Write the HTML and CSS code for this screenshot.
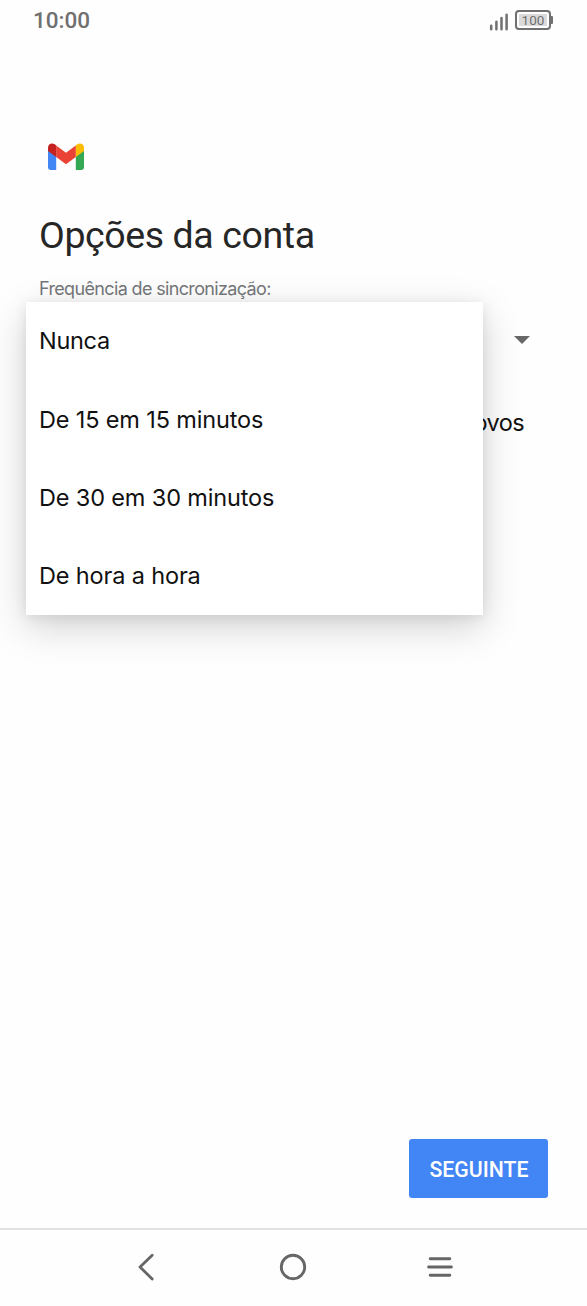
FILE: index.html
```html
<!DOCTYPE html>
<html lang="pt">
<head>
<meta charset="utf-8">
<title>Opções da conta</title>
<link rel="stylesheet" href="styles.css">
</head>
<body>
<header class="status">
  <span class="clock">10:00</span>
  <div class="indicators">
    <svg class="signal" width="20" height="18" viewBox="0 0 20 18" fill="none" stroke="#707070" stroke-width="2.5" stroke-linecap="round"><path d="M2.2 16.2v-3.4M7.4 16.2V8.7M12.5 16.2V5M17.6 16.2V1.8"/></svg>
    <div class="battery"><span class="charge">100</span></div>
  </div>
</header>
<main class="page">
  <svg class="logo" width="36" height="27" viewBox="0 0 36 27">
    <path fill="#4285f4" d="M0 7l8.200 6v14H2.400A2.400 2.400 0 0 1 0 24.600z"/>
    <path fill="#34a853" d="M36 7l-8.200 6v14h5.800A2.400 2.400 0 0 0 36 24.600z"/>
    <path fill="#fbbc04" d="M27.800 2.400l1.400-1.100C32-.8 36 .9 36 4.500V8l-8.200 6z"/>
    <path fill="#ea4335" d="M8.200 2.400L18 9.700l9.800-7.300V14L18 21.300 8.200 14z"/>
    <path fill="#c5221f" d="M0 4.500C0 .9 4-.8 6.800 1.300l1.400 1.100V14L0 8z"/>
  </svg>
  <h1 class="title">Opções da conta</h1>
  <div class="label">Frequência de sincronização:</div>
  <section class="fields">
    <div class="select"><svg width="16" height="8" viewBox="0 0 16 8"><path fill="#686868" d="M0 0h16L8 8z"/></svg></div>
    <div class="notify">novos</div>
    <ul class="menu">
      <li class="option never"><span>Nunca</span></li>
      <li class="option"><span>De 15 em 15 minutos</span></li>
      <li class="option"><span>De 30 em 30 minutos</span></li>
      <li class="option"><span>De hora a hora</span></li>
    </ul>
  </section>
  <div class="actions"><button class="next">SEGUINTE</button></div>
</main>
<nav class="nav">
  <svg width="28" height="28" viewBox="0 0 28 28" fill="none" stroke="#666" stroke-width="2.800" stroke-linecap="round" stroke-linejoin="round"><path d="M20.200 2.200L8 14l12.200 12"/></svg>
  <svg width="28" height="28" viewBox="0 0 28 28" fill="none" stroke="#666" stroke-width="2.900"><circle cx="14" cy="14" r="11.700"/></svg>
  <svg width="28" height="28" viewBox="0 0 28 28" fill="none" stroke="#666" stroke-width="2.900" stroke-linecap="round"><path d="M4.200 5.800h19.600M2.600 14h22.800M4.200 22.200h19.600"/></svg>
</nav>
</body>
</html>
```
FILE: styles.css
```css
* { box-sizing: border-box; }
body { margin: 0; height: 1306px; display: flex; flex-direction: column; background: #fefefe; font-family: Inter, sans-serif; overflow: hidden; }
.status { height: 40px; padding: 0 33px; display: flex; justify-content: space-between; align-items: center; flex: none; }
.clock { font: 500 22.500px/40px Roboto, sans-serif; color: #707070; letter-spacing: 0; }
.indicators { display: flex; gap: 6px; align-items: center; }
.signal { margin-top: 4px; }
.battery { position: relative; width: 36px; height: 20px; margin-right: 3px; padding: 2px; border: 2px solid #707070; border-radius: 4px; }
.battery::after { content: ""; position: absolute; right: -4px; top: 4px; width: 3px; height: 8px; background: #707070; border-radius: 0 1px 1px 0; }
.charge { display: block; height: 12px; background: #dadada; font: 400 13.500px/13px Roboto, sans-serif; color: #707070; text-align: center; }
.page { flex: 1; display: flex; flex-direction: column; padding: 103px 39px 0; }
.logo { margin-left: 9px; flex: none; }
.title { margin: 43px 0 0; font: 400 37.500px/44px Roboto, sans-serif; color: #262626; white-space: nowrap; letter-spacing: -.4px; }
.label { margin-top: 20px; height: 25px; font-size: 18px; line-height: 24px; color: #75777a; letter-spacing: -.65px; white-space: nowrap; }
.fields { position: relative; height: 313px; flex: none; }
.select { height: 78px; padding: 34px 18px 0 0; display: flex; justify-content: flex-end; }
.notify { margin-top: 26px; padding-right: 24px; text-align: right; font-size: 23.500px; line-height: 34px; color: #111; letter-spacing: -.6px; }
.menu { position: absolute; left: -13px; top: 0; width: 457px; height: 313px; margin: 0; padding: 0; list-style: none; display: grid; grid-template-rows: repeat(4, 1fr); background: #fff; box-shadow: 0 12px 36px rgba(0,0,0,.18), 0 2px 12px rgba(0,0,0,.08); }
.option { padding-left: 13px; display: flex; align-items: center; font-size: 23.500px; color: #111; letter-spacing: -.15px; white-space: nowrap; }
.never { letter-spacing: -.3px; padding-bottom: 1px; }
.actions { margin-top: auto; padding-bottom: 30px; display: flex; justify-content: flex-end; }
.next { width: 139px; height: 59px; padding: 2px 0 0 1px; border: 0; border-radius: 3px; background: #4285f4; color: #fff; font: 500 21.300px/57px Roboto, sans-serif; }
.nav { height: 78px; flex: none; border-top: 2px solid #e2e2e2; padding: 0 2px 2px 0; display: flex; justify-content: center; align-items: center; gap: 119px; }
```
